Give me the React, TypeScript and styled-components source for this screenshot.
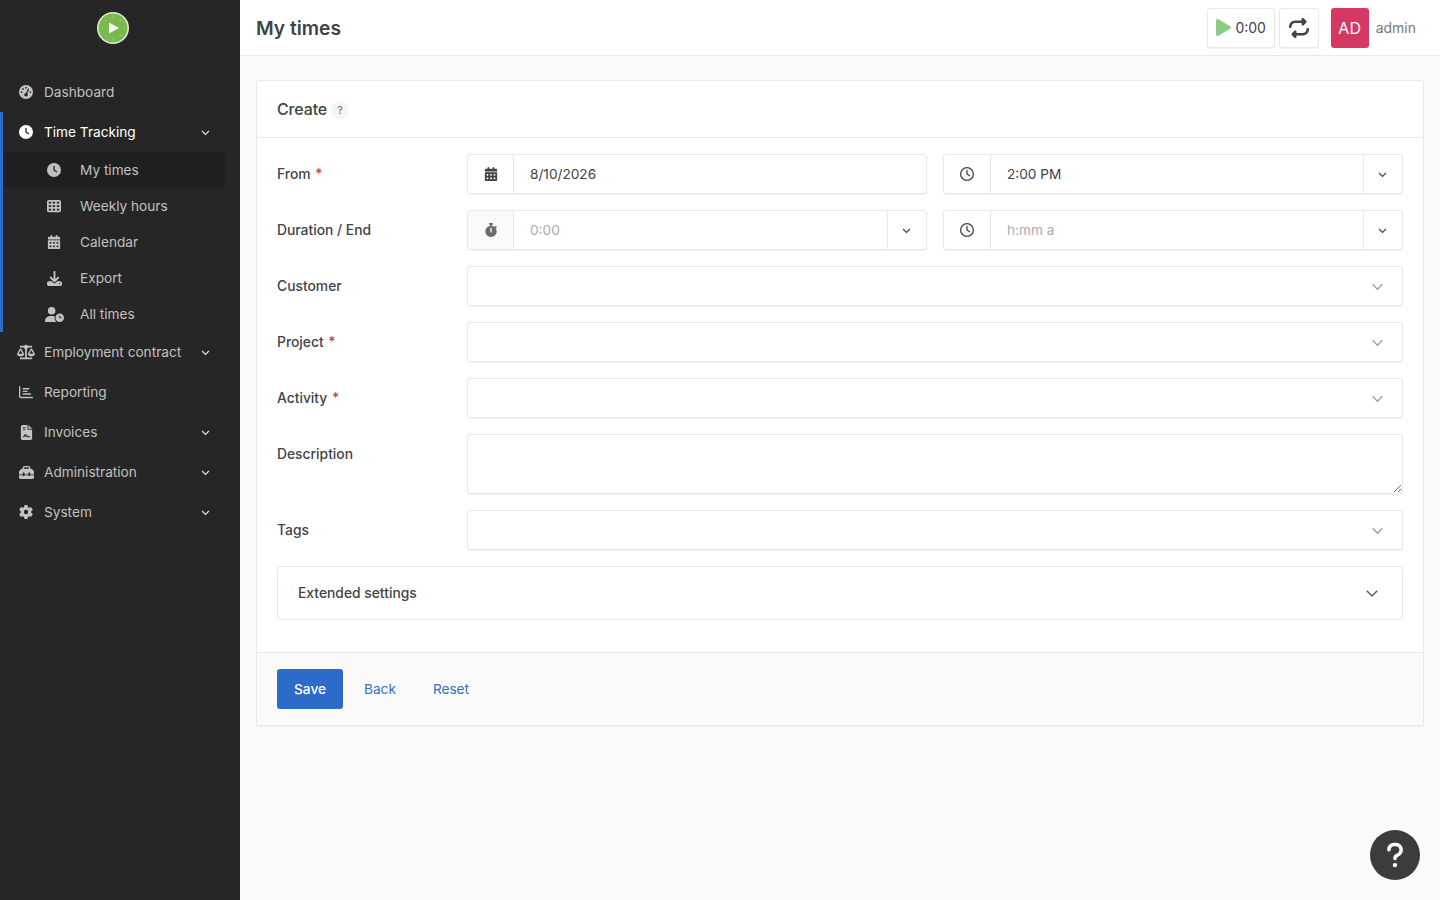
import React from 'react';
import styled, { createGlobalStyle } from 'styled-components';
import { FaPlay } from 'react-icons/fa';
import {
  FaGaugeHigh,
  FaClock,
  FaRegClock,
  FaTableCells,
  FaCalendarDays,
  FaDownload,
  FaUserClock,
  FaScaleBalanced,
  FaRegChartBar,
  FaFileContract,
  FaToolbox,
  FaGear,
  FaStopwatch,
  FaRepeat,
  FaQuestion,
} from 'react-icons/fa6';

const GlobalStyle = createGlobalStyle`
  * { box-sizing: border-box; }
  html, body { margin: 0; padding: 0; }
  body {
    background: #fafafa;
    color: #404347;
    font-family: Inter, "Liberation Sans", sans-serif;
    font-size: 13.65px;
    line-height: 20px;
  }
`;

const Chevron = ({ size = 9, width = 1.6 }: { size?: number; width?: number }) => (
  <svg width={size} height={size} viewBox="0 0 12 12" fill="none" stroke="currentColor" strokeWidth={width}>
    <path d="M1.5 4l4.5 4.5L10.5 4" />
  </svg>
);

const Logo = () => (
  <svg width="32" height="32" viewBox="0 0 32 32">
    <circle cx="16" cy="16" r="15.2" fill="#79b94f" stroke="#dcecd2" strokeWidth="1.6" />
    <g stroke="#9ed07f" strokeWidth="1">
      <path d="M16 4v2M16 26v2M4 16h2M26 16h2M8 8l1.4 1.4M24 8l-1.4 1.4M8 24l1.4-1.4M24 24l-1.4-1.4" />
    </g>
    <path d="M12 10.5L22 16l-10 5.5z" fill="#f4f8ef" />
  </svg>
);

const subItems = [
  { icon: <FaClock size={14} />, label: 'My times', active: true },
  { icon: <FaTableCells size={14} />, label: 'Weekly hours' },
  { icon: <FaCalendarDays size={14} />, label: 'Calendar' },
  { icon: <FaDownload size={15} />, label: 'Export' },
  { icon: <FaUserClock size={19} />, label: 'All times' },
];

const bottomItems = [
  { icon: <FaScaleBalanced size={18} />, label: 'Employment contract', arrow: true },
  { icon: <FaRegChartBar size={14} />, label: 'Reporting' },
  { icon: <FaFileContract size={15} />, label: 'Invoices', arrow: true },
  { icon: <FaToolbox size={15} />, label: 'Administration', arrow: true },
  { icon: <FaGear size={14} />, label: 'System', arrow: true },
];

const selectRows = [
  { label: 'Customer' },
  { label: 'Project', required: true },
  { label: 'Activity', required: true },
];

export default function App() {
  return (
    <>
      <GlobalStyle />
      <Page>
        <Sidebar>
          <LogoBar>
            <Logo />
          </LogoBar>
          <Nav>
            <NavRow>
              <NavIcon><FaGaugeHigh size={14} /></NavIcon>
              <NavLabel>Dashboard</NavLabel>
            </NavRow>
            <NavGroup>
              <NavRow $open>
                <NavIcon><FaClock size={14} /></NavIcon>
                <NavLabel>Time Tracking</NavLabel>
                <NavArrow><Chevron /></NavArrow>
              </NavRow>
              {subItems.map((item) => (
                <SubRow key={item.label} $active={item.active}>
                  <SubIcon>{item.icon}</SubIcon>
                  {item.label}
                </SubRow>
              ))}
            </NavGroup>
            {bottomItems.map((item) => (
              <NavRow key={item.label}>
                <NavIcon>{item.icon}</NavIcon>
                <NavLabel>{item.label}</NavLabel>
                {item.arrow && <NavArrow><Chevron /></NavArrow>}
              </NavRow>
            ))}
          </Nav>
        </Sidebar>
        <Main>
          <Header>
            <Title>My times</Title>
            <HeaderActions>
              <TimerButton>
                <PlayIcon><FaPlay /></PlayIcon>
                0:00
              </TimerButton>
              <RepeatButton><FaRepeat /></RepeatButton>
              <Avatar>AD</Avatar>
              <UserName>admin</UserName>
            </HeaderActions>
          </Header>
          <Content>
            <Card>
              <CardHeader>
                <CardTitle>Create</CardTitle>
                <HelpBadge>?</HelpBadge>
              </CardHeader>
              <CardBody>
                <FormRow>
                  <FieldLabel>From <Star>*</Star></FieldLabel>
                  <TwoColumns>
                    <InputGroup>
                      <Addon><FaCalendarDays /></Addon>
                      <TextInput defaultValue="8/10/2026" />
                    </InputGroup>
                    <InputGroup>
                      <Addon $wide><FaRegClock /></Addon>
                      <TextInput defaultValue="2:00 PM" />
                      <ArrowAddon><Chevron /></ArrowAddon>
                    </InputGroup>
                  </TwoColumns>
                </FormRow>
                <FormRow>
                  <FieldLabel>Duration / End</FieldLabel>
                  <TwoColumns>
                    <InputGroup>
                      <Addon $muted><FaStopwatch /></Addon>
                      <TextInput placeholder="0:00" />
                      <ArrowAddon><Chevron /></ArrowAddon>
                    </InputGroup>
                    <InputGroup>
                      <Addon $wide><FaRegClock /></Addon>
                      <TextInput placeholder="h:mm a" />
                      <ArrowAddon><Chevron /></ArrowAddon>
                    </InputGroup>
                  </TwoColumns>
                </FormRow>
                {selectRows.map((row) => (
                  <FormRow key={row.label}>
                    <FieldLabel>
                      {row.label} {row.required && <Star>*</Star>}
                    </FieldLabel>
                    <SelectBox>
                      <Chevron size={13} width={1.2} />
                    </SelectBox>
                  </FormRow>
                ))}
                <FormRow>
                  <FieldLabel>Description</FieldLabel>
                  <TextArea />
                </FormRow>
                <FormRow>
                  <FieldLabel>Tags</FieldLabel>
                  <SelectBox>
                    <Chevron size={13} width={1.2} />
                  </SelectBox>
                </FormRow>
                <Accordion>
                  Extended settings
                  <AccordionArrow><Chevron size={14} width={1.3} /></AccordionArrow>
                </Accordion>
              </CardBody>
              <CardFooter>
                <SaveButton>Save</SaveButton>
                <LinkButton>Back</LinkButton>
                <LinkButton>Reset</LinkButton>
              </CardFooter>
            </Card>
          </Content>
        </Main>
        <HelpButton><FaQuestion /></HelpButton>
      </Page>
    </>
  );
}

const Page = styled.div`
  display: flex;
  min-height: 100vh;
`;

const Sidebar = styled.aside`
  flex: 0 0 240px;
  background: #262626;
  color: rgba(255, 255, 255, 0.75);
`;

const LogoBar = styled.div`
  height: 56px;
  display: flex;
  align-items: center;
  justify-content: center;
  padding-right: 14px;
`;

const Nav = styled.nav`
  padding-top: 16px;
`;

const NavGroup = styled.div`
  border-left: 3px solid #2c6bc9;
`;

const NavRow = styled.div<{ $open?: boolean }>`
  height: 40px;
  display: flex;
  align-items: center;
  color: ${(p) => (p.$open ? '#fff' : 'rgba(255, 255, 255, 0.72)')};
  padding: 0 30px 0 ${(p) => (p.$open ? '15px' : '18px')};
`;

const NavIcon = styled.span`
  width: 16px;
  margin-right: 10px;
  display: flex;
  justify-content: center;

  svg {
    flex: none;
  }
`;

const NavLabel = styled.span`
  flex: 1;
  white-space: nowrap;
`;

const NavArrow = styled.span`
  display: flex;
  color: rgba(255, 255, 255, 0.85);
`;

const SubRow = styled.div<{ $active?: boolean }>`
  height: 36px;
  width: 222px;
  display: flex;
  align-items: center;
  padding-left: 43px;
  color: rgba(255, 255, 255, 0.72);
  background: ${(p) => (p.$active ? '#1f1f1f' : 'transparent')};
`;

const SubIcon = styled.span`
  width: 16px;
  margin-right: 18px;
  display: flex;
  justify-content: center;

  svg {
    flex: none;
  }
`;

const Main = styled.main`
  flex: 1;
  min-width: 0;
`;

const Header = styled.header`
  height: 56px;
  background: #fff;
  border-bottom: 1px solid #e8e8e8;
  display: flex;
  align-items: center;
  justify-content: space-between;
  padding: 0 24px 0 16px;
`;

const Title = styled.h1`
  margin: 0;
  font-size: 19.2px;
  line-height: 24px;
  font-weight: 600;
  color: #404347;
`;

const HeaderActions = styled.div`
  display: flex;
  align-items: center;
  font-size: 14px;
`;

const ToolButton = styled.button`
  height: 40px;
  padding: 0;
  background: #fff;
  border: 1px solid #e8e8e8;
  border-radius: 3px;
  box-shadow: 0 1px 1px rgba(0, 0, 0, 0.06);
  color: #404347;
  font: inherit;
  display: flex;
  align-items: center;
  justify-content: center;
`;

const TimerButton = styled(ToolButton)`
  width: 68px;
  gap: 3px;
`;

const PlayIcon = styled.span`
  display: flex;
  color: #8bcb86;
  font-size: 17px;
`;

const RepeatButton = styled(ToolButton)`
  width: 40px;
  margin-left: 4px;
  font-size: 20px;
`;

const Avatar = styled.div`
  width: 38px;
  height: 40px;
  margin-left: 12px;
  border-radius: 3px;
  background: #d63864;
  color: #fff;
  font-size: 16px;
  display: flex;
  align-items: center;
  justify-content: center;
`;

const UserName = styled.span`
  margin-left: 7px;
  color: #76797e;
`;

const Content = styled.div`
  padding: 24px 16px;
`;

const Card = styled.section`
  background: #fff;
  border: 1px solid #e8e8e8;
  border-radius: 3px;
  box-shadow: 0 1px 1px rgba(0, 0, 0, 0.03);
`;

const CardHeader = styled.div`
  height: 57px;
  padding: 0 20px;
  border-bottom: 1px solid #e8e8e8;
  display: flex;
  align-items: center;
`;

const CardTitle = styled.h3`
  margin: 0;
  font-size: 16px;
  letter-spacing: -0.15px;
  font-weight: 500;
  line-height: 24px;
  color: #404347;
`;

const HelpBadge = styled.span`
  width: 18px;
  height: 18px;
  margin: 2px 0 0 4px;
  border-radius: 50%;
  background: #f5f5f5;
  color: #6a6d72;
  font-size: 11px;
  line-height: 18px;
  text-align: center;
`;

const CardBody = styled.div`
  padding: 16px 20px 32px;
  display: flex;
  flex-direction: column;
  gap: 16px;
`;

const FormRow = styled.div`
  display: grid;
  grid-template-columns: 190px 1fr;
`;

const FieldLabel = styled.label`
  padding-top: 10px;
  font-size: 13.85px;
  font-weight: 500;
  color: #404347;
`;

const Star = styled.span`
  margin-left: 1px;
  color: #c9403c;
`;

const TwoColumns = styled.div`
  display: grid;
  grid-template-columns: 1fr 1fr;
  gap: 16px;
`;

const InputGroup = styled.div`
  height: 40px;
  display: flex;
  background: #fff;
  border: 1px solid #e8e8e8;
  border-radius: 3px;
  box-shadow: 0 1px 1px rgba(0, 0, 0, 0.06);
`;

const Addon = styled.span<{ $muted?: boolean; $wide?: boolean }>`
  flex: 0 0 ${(p) => (p.$wide ? '47px' : '46px')};
  display: flex;
  align-items: center;
  justify-content: center;
  border-right: 1px solid #e8e8e8;
  background: ${(p) => (p.$muted ? '#fafafa' : 'transparent')};
  color: ${(p) => (p.$muted ? '#6a6d72' : '#404347')};
  font-size: 14px;
`;

const ArrowAddon = styled.span`
  flex: 0 0 39px;
  padding-right: 2px;
  display: flex;
  align-items: center;
  justify-content: center;
  border-left: 1px solid #e8e8e8;
  color: #404347;
`;

const TextInput = styled.input`
  flex: 1;
  min-width: 0;
  border: 0;
  outline: 0;
  padding: 0 16px;
  background: transparent;
  color: #404347;
  font: inherit;

  &::placeholder {
    color: #a9abae;
    opacity: 1;
  }
`;

const SelectBox = styled.div`
  height: 40px;
  padding-right: 18px;
  display: flex;
  align-items: center;
  justify-content: flex-end;
  background: #fff;
  border: 1px solid #e8e8e8;
  border-radius: 3px;
  box-shadow: 0 1px 1px rgba(0, 0, 0, 0.06);
  color: #9a9c9f;
`;

const TextArea = styled.textarea`
  display: block;
  width: 100%;
  height: 60px;
  padding: 8px 16px;
  background: #fff;
  border: 1px solid #e8e8e8;
  border-radius: 3px;
  box-shadow: 0 1px 1px rgba(0, 0, 0, 0.06);
  outline: 0;
  font: inherit;
`;

const Accordion = styled.div`
  height: 54px;
  padding: 0 23px 0 20px;
  display: flex;
  align-items: center;
  justify-content: space-between;
  border: 1px solid #e8e8e8;
  border-radius: 3px;
  font-size: 13.85px;
  font-weight: 500;
  color: #404347;
`;

const AccordionArrow = styled.span`
  display: flex;
  color: #5f6266;
`;

const CardFooter = styled.div`
  height: 73px;
  padding: 0 20px;
  display: flex;
  align-items: center;
  background: #fafafa;
  border-top: 1px solid #e8e8e8;
  border-radius: 0 0 3px 3px;
`;

const SaveButton = styled.button`
  width: 66px;
  height: 40px;
  margin-right: 2.5px;
  border: 0;
  border-radius: 3px;
  background: #2c6bc9;
  color: #fff;
  font: inherit;
  font-weight: 500;
`;

const LinkButton = styled.button`
  height: 40px;
  padding: 0 18.5px;
  border: 0;
  background: transparent;
  color: #2f72cd;
  font: inherit;
`;

const HelpButton = styled.button`
  position: fixed;
  right: 20px;
  bottom: 20px;
  width: 50px;
  height: 50px;
  padding: 0;
  border: 0;
  border-radius: 50%;
  background: #3c3c3c;
  color: #fff;
  font-size: 28px;
  display: flex;
  align-items: center;
  justify-content: center;
`;
